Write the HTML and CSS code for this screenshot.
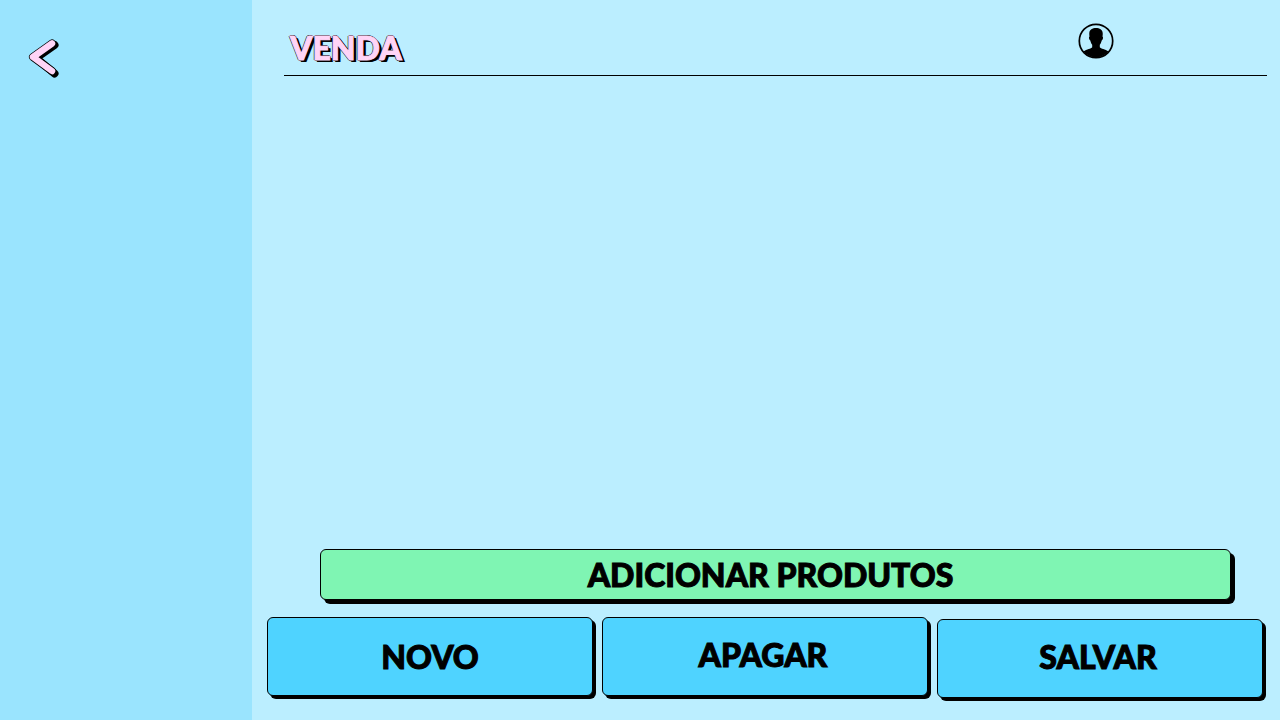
FILE: index.html
```html
<!DOCTYPE html>
<html lang="pt-BR">
<head>
<meta charset="utf-8">
<meta name="viewport" content="width=device-width, initial-scale=1">
<title>Venda</title>
<link rel="stylesheet" href="styles.css">
</head>
<body>
<div class="app">
  <aside class="sidebar">
    <button class="back" type="button" aria-label="Voltar">
      <svg class="back-icon" viewBox="0 0 32 42" fill="none" stroke-linecap="round" stroke-linejoin="round">
        <path d="M26.500 8 8 21 26.500 36.500" stroke="#000" stroke-width="8"/>
        <path d="M24 6.500 5 20 24 34" stroke="#000" stroke-width="8"/>
        <path d="M24 6.500 5 20 24 34" stroke="#ffd4f6" stroke-width="6.500"/>
      </svg>
    </button>
  </aside>
  <main class="main">
    <header class="header">
      <h1 class="title">VENDA</h1>
      <button class="profile" type="button" aria-label="Perfil">
        <svg class="profile-icon" viewBox="0 0 36 36">
          <circle cx="18" cy="18" r="16.700" fill="none" stroke="#000" stroke-width="1.700"/>
          <path d="M11.300 10C11.500 6.500 14.500 5 18 5s6.500 1.500 6.700 5c.1 1.500 0 2.500-.2 3.500 1 .5.500 3.300-.8 4-.4 2-1.100 3.200-1.900 4.200v2.600c1 1.500 5.500 2 8.700 4.200A16.500 16.500 0 0 1 5.500 28.500c3.200-2.200 7.700-2.700 8.700-4.200v-2.600c-.8-1-1.500-2.200-1.900-4.200-1.300-.7-1.800-3.500-.8-4-.2-1-.3-2-.2-3.500Z"/>
        </svg>
      </button>
    </header>
    <section class="products" aria-label="Produtos"></section>
    <button class="btn btn-add" type="button">ADICIONAR PRODUTOS</button>
    <div class="actions">
      <button class="btn btn-action" type="button">NOVO</button>
      <button class="btn btn-action btn-delete" type="button">APAGAR</button>
      <button class="btn btn-action btn-save" type="button">SALVAR</button>
    </div>
  </main>
</div>
</body>
</html>
```
FILE: styles.css
```css
* { box-sizing: border-box; }
body {
  margin: 0;
  background: #bbeeff;
  color: #000;
  font-family: Lato, "Open Sans", sans-serif;
}
button { font: inherit; color: inherit; cursor: pointer; }
.app { display: flex; min-height: 100vh; }
.sidebar {
  flex: 0 0 252px;
  padding: 37px 28px;
  background: #9ae4fe;
}
.back, .profile {
  display: block;
  padding: 0;
  border: 0;
  background: none;
}
.back-icon { display: block; width: 32px; height: 42px; }
.main {
  flex: 1;
  min-width: 0;
  display: flex;
  flex-direction: column;
  padding: 0 13px 22px 15px;
}
.header {
  display: flex;
  align-items: center;
  justify-content: space-between;
  height: 76px;
  margin-left: 17px;
  padding: 6px 153px 0 6px;
  border-bottom: 1px solid #000;
}
.title {
  margin: 0;
  padding-top: 14px;
  font-size: 32px;
  line-height: 40px;
  font-weight: 900;
  color: #ffd4f6;
  -webkit-text-stroke: 1px #ffd4f6;
  text-shadow: -1px 0 0 #000, 1px 0 0 #000, 0 -1px 0 #000, 0 1px 0 #000, 1px 1px 0 #000, 2px 2px 0 #000, 3px 2px 0 #000;
}
.profile-icon { display: block; width: 36px; height: 36px; }
.products { flex: 1; }
.btn {
  border: 1px solid #000;
  border-radius: 6px;
  font-size: 32px;
  line-height: 40px;
  font-weight: 900;
  -webkit-text-stroke: 1px #000;
}
.btn-add {
  height: 51px;
  margin: 0 36px 17px 53px;
  padding: 0 10px 0 0;
  background: #7ff5b3;
  box-shadow: 4px 4px 0 #000;
}
.actions {
  display: grid;
  grid-template-columns: repeat(3, 1fr);
  gap: 9px;
  margin-right: 4px;
}
.btn-action {
  height: 79px;
  padding: 0;
  background: #4fd3ff;
  box-shadow: 3px 3px 0 #000;
}
.btn-delete { padding: 0 4px 4px 0; }
.btn-save {
  margin: 2px 0 0;
  padding: 0 4px 4px 0;
}
```
